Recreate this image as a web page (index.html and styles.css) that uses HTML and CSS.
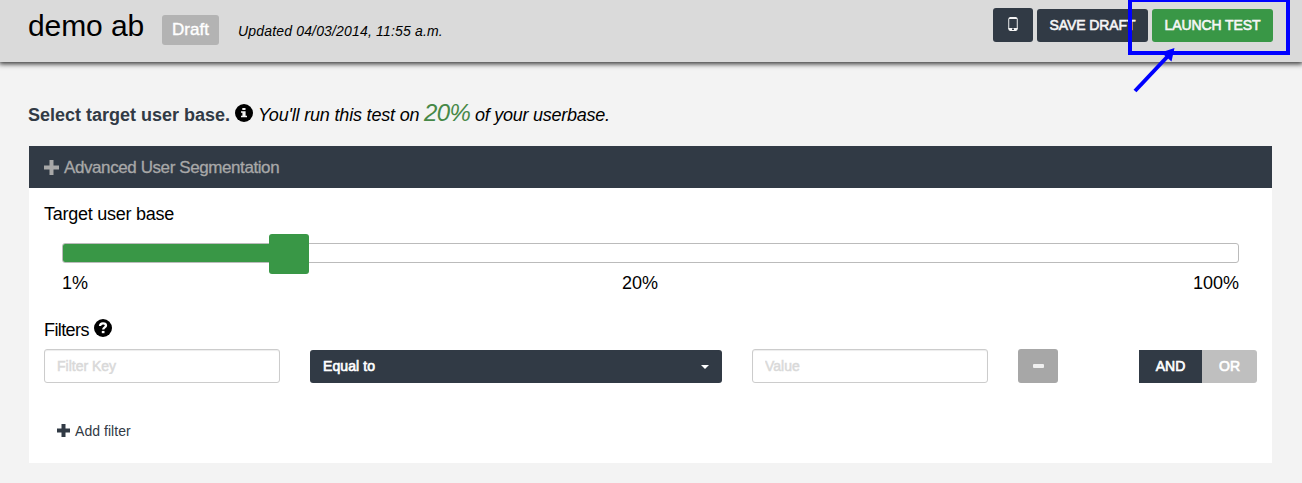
FILE: index.html
```html
<!DOCTYPE html>
<html lang="en">
<head>
<meta charset="utf-8">
<title>demo ab</title>
<link rel="stylesheet" href="styles.css">
</head>
<body>
<header class="topbar">
  <h1 class="title">demo ab</h1>
  <span class="badge">Draft</span>
  <em class="updated">Updated 04/03/2014, 11:55 a.m.</em>
  <div class="actions">
    <button class="btn btn-phone" aria-label="Preview"><svg width="10" height="14" viewBox="0 0 10 14"><path fill="#bfc2c5" d="M0 2h1.300v10H0zM8.700 2H10v10H8.700z"/><path fill="#f4f4f4" fill-rule="evenodd" d="M2 0h6l1.500 1v1h-9V1zM.5 11h9v2L8 14H2L.5 13zM4 11.600v1.300h2v-1.300z"/></svg></button>
    <button class="btn btn-save">SAVE DRAFT</button>
    <button class="btn btn-launch">LAUNCH TEST</button>
  </div>
</header>
<main class="content">
  <p class="lead">
    <strong class="lead-title">Select target user base.</strong>
    <svg class="lead-icon" width="18" height="18" viewBox="0 0 18 18"><circle cx="9" cy="9" r="9" fill="#000"/><path fill="#f3f3f3" d="M7.300 4h3.200v2H7.300zM6 7.200h4.600v4.600h1.400v1.500H6v-1.500h1.400V8.700H6z"/></svg>
    <em class="lead-text"><span class="lead-a">You'll run this test on</span><span class="percent">20%</span><span class="lead-b">of your userbase.</span></em>
  </p>
  <section class="panel">
    <div class="panel-head">
      <svg width="15" height="15" viewBox="0 0 15 15"><path fill="#a8a8a8" d="M5.500 0h4v5.500H15v4H9.500V15h-4V9.500H0v-4h5.500z"/></svg>
      <span>Advanced User Segmentation</span>
    </div>
    <div class="panel-body">
      <div class="label target-label">Target user base</div>
      <div class="slider"><div class="fill"></div><div class="handle"></div></div>
      <div class="scale"><span>1%</span><span>20%</span><span>100%</span></div>
      <div class="label filters-label"><span>Filters</span><svg width="18" height="18" viewBox="0 0 18 18"><circle cx="9" cy="9" r="9" fill="#000"/><path fill="none" stroke="#fff" stroke-width="2.3" d="M6 7c.1-1.900 1.300-2.700 3-2.700s3 .9 3 2.300c0 1.900-2.800 1.700-2.800 4"/><path fill="#fff" d="M7.800 11.900h2.700v2.300H7.800z"/></svg></div>
      <div class="filters">
        <input class="field" type="text" placeholder="Filter Key">
        <div class="select"><span>Equal to</span><i class="caret"></i></div>
        <input class="field" type="text" placeholder="Value">
        <button class="remove" aria-label="Remove"><i class="minus"></i></button>
        <div class="toggle"><span class="and">AND</span><span class="or">OR</span></div>
      </div>
      <div class="add">
        <svg width="13" height="13" viewBox="0 0 13 13"><path fill="#313a45" d="M4.500 0h4v4.500H13v4H8.500V13h-4V8.500H0v-4h4.500z"/></svg>
        <span>Add filter</span>
      </div>
    </div>
  </section>
</main>
<svg class="callout" width="174" height="96" viewBox="0 0 174 96">
  <path fill="none" stroke="#00f" stroke-width="4" d="M2 0h158v53H2z"/>
  <path fill="none" stroke="#00f" stroke-width="4" d="M7 91L40 56"/>
  <path fill="#00f" d="M46.500 48L43.500 61.500 38.500 57 33 52.500z"/>
</svg>
</body>
</html>
```
FILE: styles.css
```css
* { box-sizing: border-box; }
body {
  margin: 0;
  height: 483px;
  overflow: hidden;
  background: #f3f3f3;
  color: #000;
  font-family: "Liberation Sans", Arial, sans-serif;
}
.topbar {
  display: flex;
  align-items: flex-start;
  height: 62px;
  padding: 8px 29px 0 28px;
  background: #dadada;
  box-shadow: 0 1px 5px 1px #333;
}
.title { margin: 0; font-size: 30px; line-height: 36px; font-weight: 400; white-space: nowrap; width: 134px; letter-spacing: -.1px; }
.badge {
  width: 57px; height: 30px; margin-top: 7px;
  border-radius: 3px;
  background: #b3b3b3;
  color: #fff;
  font-size: 17px; line-height: 30px; text-align: center;
  -webkit-text-stroke: .4px #fff;
}
.updated { margin: 14px 0 0 19px; font-size: 14px; line-height: 18px; letter-spacing: .17px; }
.actions { display: flex; align-items: flex-end; gap: 4px; margin-left: auto; }
.btn {
  height: 33px; padding: 0; border: 0; border-radius: 3px;
  background: #313a45; color: #f6f6f6;
  font: 14px/33px "Liberation Sans", Arial, sans-serif;
  -webkit-text-stroke: .6px #f6f6f6;
  white-space: nowrap;
}
.btn-phone { display: flex; align-items: center; justify-content: center; width: 40px; height: 34px; padding-bottom: 2px; }
.btn-save { width: 111px; letter-spacing: -.1px; }
.btn-launch { width: 121px; background: #399746; letter-spacing: -.1px; }
.content { padding: 35px 30px 0 29px; }
.lead { display: flex; align-items: baseline; height: 49px; margin: 0 0 0 -1px; font-size: 18px; line-height: 32px; white-space: nowrap; }
.lead-title { width: 207px; color: #313a45; }
.lead-icon { align-self: flex-start; margin-top: 7px; }
.lead-text { display: flex; align-items: baseline; margin-left: 5px; }
.lead-a { width: 166px; letter-spacing: -.18px; }
.percent { width: 51px; color: #468847; font-size: 24px; letter-spacing: -.6px; }
.lead-b { letter-spacing: -.25px; }
.panel { height: 317px; background: #fff; }
.panel-head {
  display: flex; align-items: center; gap: 5px;
  height: 42px; padding-left: 15px;
  background: #313a45; color: #a8a8a8;
  font-size: 17px; letter-spacing: -.41px;
  -webkit-text-stroke: .3px #a8a8a8;
}
.panel-head span { padding-top: 1px; }
.panel-body { padding: 15px 15px 0; }
.label { font-size: 18px; line-height: 22px; letter-spacing: -.25px; }
.slider {
  position: relative;
  height: 20px; margin: 18px 18px 0;
  border: 1px solid #bbb; border-radius: 3px;
}
.fill { width: 210px; height: 18px; background: #399746; border-radius: 2px 0 0 2px; }
.handle { position: absolute; left: 206px; top: -10px; width: 40px; height: 40px; border-radius: 3px; background: #399746; }
.scale { display: grid; grid-template-columns: 1fr 1fr 1fr; margin: 9px 18px 0; font-size: 18px; line-height: 22px; }
.scale span:nth-child(2) { text-align: center; padding-right: 21px; }
.scale span:last-child { text-align: right; }
.filters-label { display: flex; align-items: flex-start; gap: 5px; margin-top: 25px; letter-spacing: -.6px; }
.filters { display: flex; align-items: flex-end; height: 34px; margin-top: 8px; font-size: 14px; }
.field {
  width: 236px; height: 34px; padding: 0 12px;
  border: 1px solid #ccc; border-radius: 3px; background: #fff;
  box-shadow: inset 0 1px 1px rgba(0,0,0,.075);
  font: 14px "Liberation Sans", Arial, sans-serif;
}
.field::placeholder { color: #d9d9d9; opacity: 1; -webkit-text-stroke: .5px #d9d9d9; }
.select {
  display: flex; align-items: center; justify-content: space-between;
  width: 412px; height: 33px; margin: 0 30px; padding: 0 13px;
  border-radius: 3px; background: #313a45; color: #fff;
  -webkit-text-stroke: .65px #fff;
}
.select span { padding-bottom: 2px; letter-spacing: .1px; }
.caret { border: 4px solid transparent; border-top-color: #fff; border-bottom: 0; }
.remove { display: flex; align-items: center; justify-content: center; width: 40px; height: 34px; margin-left: 30px; padding: 0; border: 0; border-radius: 3px; background: #a7a7a7; }
.minus { width: 11px; height: 4px; background: #f0f0f0; border-radius: 1px; }
.toggle { display: flex; margin-left: auto; line-height: 33px; text-align: center; color: #fff; -webkit-text-stroke: .65px #fff; }
.and { width: 63px; background: #313a45; }
.or { width: 55px; background: #bfbfbf; border-radius: 0 3px 3px 0; }
.add { display: flex; align-items: center; gap: 5px; margin: 38px 0 0 13px; color: #313a45; font-size: 14px; line-height: 20px; letter-spacing: .05px; }
.add svg { margin-bottom: 1px; }
.callout { position: absolute; left: 1128px; top: 0; }
```
